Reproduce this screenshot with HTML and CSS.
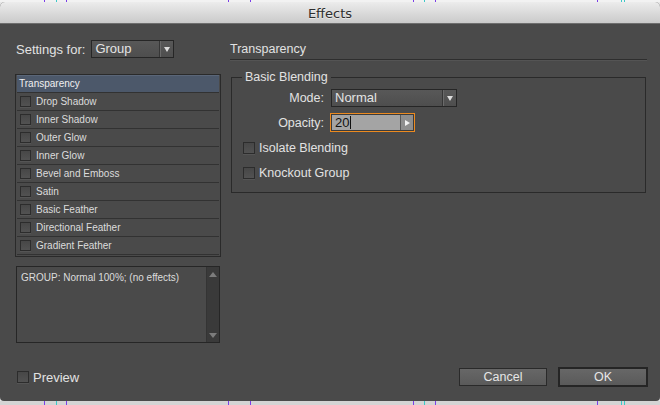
FILE: index.html
```html
<!DOCTYPE html>
<html lang="en">
<head>
  <meta charset="UTF-8">
  <meta name="viewport" content="width=device-width, initial-scale=1.0">
  <title>Effects</title>
  <link rel="stylesheet" href="styles.css">
</head>
<body>
  <div class="desk-strip desk-top"></div>

  <div id="effects-dialog">
    <div class="titlebar">Effects</div>

    <div class="dialog-body">
      <!-- Left side: target + effect list -->
      <div class="left-pane">
        <div class="settings-row">
          <span class="settings-label">Settings for:</span>
          <div class="dropdown settings-dropdown">
            <span class="dropdown-value">Group</span>
            <span class="dropdown-arrow"></span>
          </div>
        </div>

        <ul class="effects-list">
          <li class="selected">Transparency</li>
          <li><span class="checkbox"></span>Drop Shadow</li>
          <li><span class="checkbox"></span>Inner Shadow</li>
          <li><span class="checkbox"></span>Outer Glow</li>
          <li><span class="checkbox"></span>Inner Glow</li>
          <li><span class="checkbox"></span>Bevel and Emboss</li>
          <li><span class="checkbox"></span>Satin</li>
          <li><span class="checkbox"></span>Basic Feather</li>
          <li><span class="checkbox"></span>Directional Feather</li>
          <li><span class="checkbox"></span>Gradient Feather</li>
        </ul>

        <div class="summary">
          <div class="summary-text">GROUP: Normal 100%; (no effects)</div>
          <div class="scrollbar">
            <span class="scroll-up"></span>
            <span class="scroll-down"></span>
          </div>
        </div>
      </div>

      <!-- Right side: transparency settings -->
      <div class="right-pane">
        <h2 class="pane-title">Transparency</h2>
        <fieldset class="group-box">
          <legend>Basic Blending</legend>
          <div class="field-row mode-row">
            <label class="field-label">Mode:</label>
            <div class="dropdown mode-dropdown">
              <span class="dropdown-value">Normal</span>
              <span class="dropdown-arrow"></span>
            </div>
          </div>
          <div class="field-row opacity-row">
            <label class="field-label">Opacity:</label>
            <div class="spin-input">
              <span class="spin-value">20<span class="caret"></span></span>
              <span class="spin-arrow"></span>
            </div>
          </div>
          <div class="check-row isolate-row"><span class="checkbox"></span>Isolate Blending</div>
          <div class="check-row knockout-row"><span class="checkbox"></span>Knockout Group</div>
        </fieldset>
      </div>
    </div>

    <div class="dialog-footer">
      <div class="check-row preview-row"><span class="checkbox"></span>Preview</div>
      <div class="buttons">
        <button class="btn btn-cancel">Cancel</button>
        <button class="btn btn-ok">OK</button>
      </div>
    </div>
  </div>

  <div class="desk-strip desk-bottom"></div>
</body>
</html>
```

FILE: styles.css
```css
body {
  margin: 0;
  padding: 0;
  width: 660px;
  height: 405px;
  overflow: hidden;
  display: flex;
  flex-direction: column;
  background-color: #e6e6e6;
  font-family: "Liberation Sans", Arial, sans-serif;
}

/* desktop guide lines peeking out above and below the window */
.desk-strip {
  background:
    linear-gradient(#7a3ee8, #7a3ee8) 44px 0 / 1px 100% no-repeat,
    linear-gradient(#3cc8c8, #3cc8c8) 56px 0 / 1px 100% no-repeat,
    linear-gradient(#7a3ee8, #7a3ee8) 66px 0 / 1px 100% no-repeat,
    linear-gradient(#7a3ee8, #7a3ee8) 228px 0 / 1px 100% no-repeat,
    linear-gradient(#7a3ee8, #7a3ee8) 250px 0 / 1px 100% no-repeat,
    linear-gradient(#7a3ee8, #7a3ee8) 413px 0 / 1px 100% no-repeat,
    linear-gradient(#3cc8c8, #3cc8c8) 424px 0 / 1px 100% no-repeat,
    linear-gradient(#7a3ee8, #7a3ee8) 435px 0 / 1px 100% no-repeat,
    linear-gradient(#7a3ee8, #7a3ee8) 597px 0 / 1px 100% no-repeat,
    linear-gradient(#3cc8c8, #3cc8c8) 621px 0 / 1px 100% no-repeat,
    linear-gradient(#3cc8c8, #3cc8c8) 624px 0 / 1px 100% no-repeat;
}

.desk-top {
  height: 2px;
  background-color: #f2f2f2;
}

.desk-bottom {
  height: 4px;
  background-color: #d4d4d4;
}

#effects-dialog {
  height: 399px;
  display: flex;
  flex-direction: column;
  background-color: #4a4a4a;
  border-radius: 5px 5px 4px 4px;
  overflow: hidden;
  color: #e2e2e2;
}

.titlebar {
  height: 22px;
  line-height: 23px;
  text-align: center;
  font-family: "DejaVu Sans", sans-serif;
  font-size: 13px;
  color: #2e2e2e;
  text-shadow: 0 1px 0 rgba(255, 255, 255, 0.5);
  background: linear-gradient(to bottom, #ececec, #cacaca);
  box-sizing: border-box;
  border-bottom: 1px solid #6e6e6e;
}

.dialog-body {
  flex: 1;
  display: flex;
  gap: 9px;
  padding: 16px 13px 0 15px;
}

/* ---------- left pane ---------- */

.left-pane {
  width: 206px;
  display: flex;
  flex-direction: column;
}

.settings-row {
  display: flex;
  align-items: center;
  gap: 6px;
  height: 18px;
  padding-left: 1px;
  font-size: 13px;
}

.dropdown {
  display: flex;
  box-sizing: border-box;
  border: 1px solid #262626;
  background: linear-gradient(to bottom, #585858, #4e4e4e);
  color: #e4e4e4;
}

.dropdown-value {
  flex: 1;
  padding-left: 3px;
  white-space: nowrap;
}

.dropdown-arrow {
  width: 13px;
  border-left: 1px solid #363636;
  box-shadow: inset 1px 0 0 #6a6a6a;
  display: flex;
  align-items: center;
  justify-content: center;
}

.dropdown-arrow::after {
  content: "";
  border-top: 5px solid #dcdcdc;
  border-left: 3.5px solid transparent;
  border-right: 3.5px solid transparent;
  margin-left: 1px;
}

.settings-dropdown {
  width: 83px;
  height: 18px;
  line-height: 16px;
  font-size: 13px;
}

.effects-list {
  list-style-type: none;
  margin: 16px 0 0;
  padding: 0 1px 1px;
  border: 1px solid #2a2a2a;
}

.effects-list li {
  height: 17px;
  border-bottom: 1px solid #323232;
  display: flex;
  align-items: center;
  gap: 5px;
  padding-left: 3px;
  font-size: 10px;
  color: #dcdcdc;
}

.effects-list li.selected {
  padding-left: 2px;
  background-color: #4c586a;
  box-shadow: inset 0 1px 0 #5a6678;
  color: #f0f0f0;
}

.checkbox {
  width: 12px;
  height: 12px;
  flex-shrink: 0;
  box-sizing: border-box;
  border: 1px solid #2c2c2c;
  background: linear-gradient(to bottom, #474747, #525252);
  box-shadow: 0 1px 0 #555;
}

.effects-list .checkbox {
  width: 11px;
  height: 11px;
}

.summary {
  display: flex;
  margin: 9px 1px 0;
  height: 77px;
  box-sizing: border-box;
  border: 1px solid #262626;
}

.summary-text {
  flex: 1;
  padding: 5px 4px;
  font-size: 10px;
  color: #dcdcdc;
}

.scrollbar {
  width: 12px;
  background-color: #3a3a3a;
  border-left: 1px solid #343434;
  display: flex;
  flex-direction: column;
  justify-content: space-between;
  align-items: center;
  padding: 5px 0 4px;
}

.scroll-up {
  border-bottom: 5px solid #7c7c7c;
  border-left: 4px solid transparent;
  border-right: 4px solid transparent;
}

.scroll-down {
  border-top: 5px solid #7c7c7c;
  border-left: 4px solid transparent;
  border-right: 4px solid transparent;
}

/* ---------- right pane ---------- */

.right-pane {
  flex: 1;
  display: flex;
  flex-direction: column;
}

.pane-title {
  margin: 0;
  height: 19px;
  line-height: 18px;
  font-size: 12.5px;
  font-weight: normal;
  color: #e2e2e2;
  border-bottom: 1px solid #2e2e2e;
  box-shadow: 0 1px 0 #545454;
}

.group-box {
  margin: 9px 1px 0;
  padding: 4px 0 9px 10px;
  border: 1px solid #2a2a2a;
}

.group-box legend {
  padding: 0 3px;
  font-size: 12.5px;
  line-height: 16px;
  color: #e2e2e2;
}

.field-row {
  display: flex;
  align-items: center;
  gap: 7px;
  font-size: 12.5px;
}

.field-label {
  width: 82px;
  text-align: right;
}

.mode-row {
  height: 18px;
  margin-bottom: 6px;
}

.mode-dropdown {
  width: 126px;
  height: 18px;
  line-height: 16px;
  font-size: 13px;
}

.opacity-row {
  height: 19px;
}

.spin-input {
  margin-left: -1px;
  width: 85px;
  height: 19px;
  display: flex;
  box-sizing: border-box;
  border: 1px solid #ec8a1f;
  box-shadow: inset 0 0 0 1px #3c3c3c;
  background-color: #a4a4a4;
}

.spin-value {
  flex: 1;
  padding-left: 4px;
  line-height: 17px;
  font-size: 13px;
  color: #111;
  display: flex;
  align-items: center;
}

.caret {
  width: 1px;
  height: 13px;
  margin-left: 1px;
  background-color: #111;
}

.spin-arrow {
  width: 12px;
  margin: 1px 1px 1px 0;
  background-color: #8e8e8e;
  border-left: 1px solid #5a5a5a;
  display: flex;
  align-items: center;
  justify-content: center;
}

.spin-arrow::after {
  content: "";
  border-left: 5px solid #f2f2f2;
  border-top: 3.5px solid transparent;
  border-bottom: 3.5px solid transparent;
}

.check-row {
  display: flex;
  align-items: center;
  gap: 4px;
  height: 20px;
  font-size: 12.5px;
  color: #e2e2e2;
}

.check-row .checkbox {
  margin-left: 1px;
}

.isolate-row {
  margin-top: 6px;
}

.knockout-row {
  margin-top: 5px;
}

/* ---------- footer ---------- */

.dialog-footer {
  display: flex;
  justify-content: space-between;
  align-items: center;
  padding: 0 12px 14px 16px;
}

.preview-row {
  font-size: 13px;
}

.buttons {
  display: flex;
  align-items: center;
  gap: 11px;
}

.btn {
  font-family: "Liberation Sans", Arial, sans-serif;
  font-size: 12.5px;
  color: #e6e6e6;
  background: linear-gradient(to bottom, #676767, #5a5a5a);
  padding: 0;
  cursor: pointer;
}

.btn-cancel {
  width: 88px;
  height: 18px;
  border: 1px solid #2a2a2a;
}

.btn-ok {
  width: 90px;
  height: 20px;
  border: 2px solid #252525;
}
```
